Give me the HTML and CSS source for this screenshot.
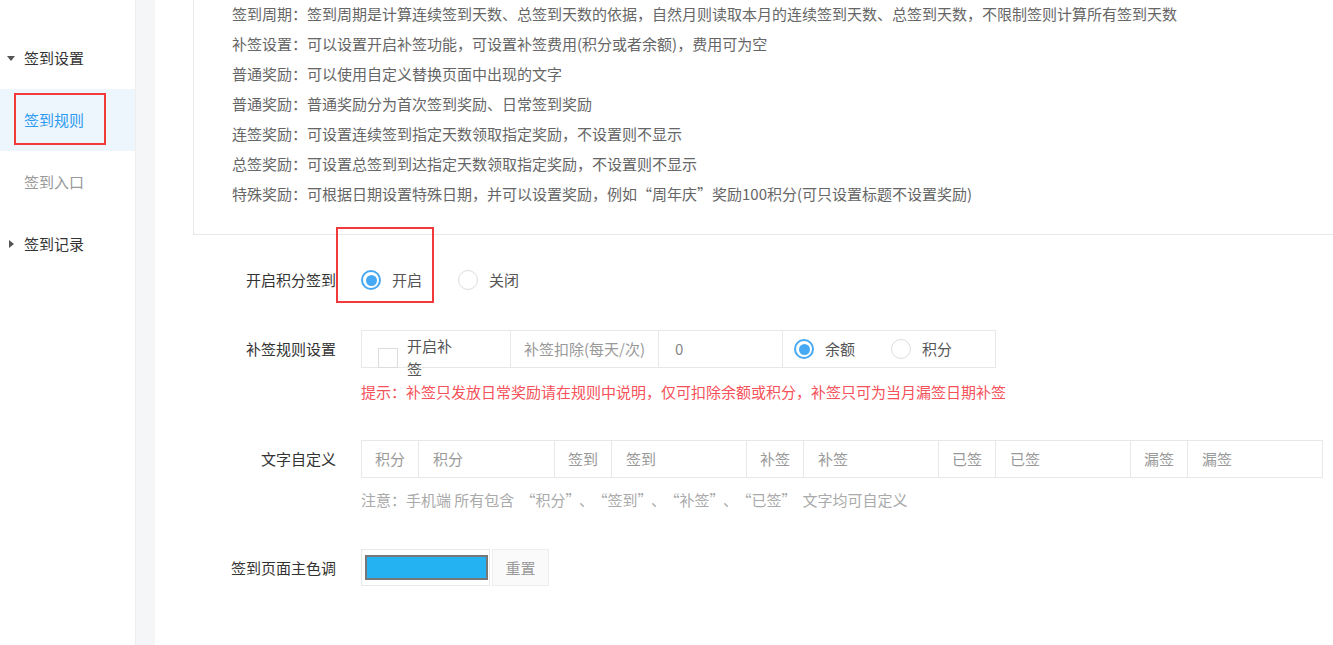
FILE: index.html
```html
<!DOCTYPE html>
<html lang="zh-CN">
<head>
    <meta charset="UTF-8">
    <meta name="viewport" content="width=device-width, initial-scale=1.0">
    <title>签到规则</title>
    <link rel="stylesheet" href="styles.css">
</head>
<body>
    <div class="layout">
        <!-- 左侧菜单 -->
        <aside class="sidebar">
            <div class="menu-title"><span class="caret caret-down"></span>签到设置</div>
            <div class="menu-item active">
                签到规则
                <span class="mark mark-menu"></span>
            </div>
            <div class="menu-item">签到入口</div>
            <div class="menu-title"><span class="caret caret-right"></span>签到记录</div>
        </aside>
        <div class="gutter"></div>

        <main class="content">
            <!-- 规则说明 -->
            <div class="rule-box">
                <div class="rule-line">签到周期：签到周期是计算连续签到天数、总签到天数的依据，自然月则读取本月的连续签到天数、总签到天数，不限制签则计算所有签到天数</div>
                <div class="rule-line">补签设置：可以设置开启补签功能，可设置补签费用(积分或者余额)，费用可为空</div>
                <div class="rule-line">普通奖励：可以使用自定义替换页面中出现的文字</div>
                <div class="rule-line">普通奖励：普通奖励分为首次签到奖励、日常签到奖励</div>
                <div class="rule-line">连签奖励：可设置连续签到指定天数领取指定奖励，不设置则不显示</div>
                <div class="rule-line">总签奖励：可设置总签到到达指定天数领取指定奖励，不设置则不显示</div>
                <div class="rule-line">特殊奖励：可根据日期设置特殊日期，并可以设置奖励，例如“周年庆”奖励100积分(可只设置标题不设置奖励)</div>
            </div>

            <!-- 表单 -->
            <form class="rule-form">
                <div class="form-item item-open">
                    <label class="form-label">开启积分签到</label>
                    <div class="form-control">
                        <label class="radio"><span class="radio-dot checked"></span><span class="radio-text">开启</span></label>
                        <label class="radio"><span class="radio-dot"></span><span class="radio-text">关闭</span></label>
                    </div>
                    <span class="mark mark-form"></span>
                </div>

                <div class="form-item item-repair">
                    <label class="form-label">补签规则设置</label>
                    <div class="form-control">
                        <div class="input-group">
                            <div class="cell cell-check">
                                <span class="checkbox"></span>
                                <span class="check-text">开启补签</span>
                            </div>
                            <div class="cell addon addon-wide">补签扣除(每天/次)</div>
                            <div class="cell cell-input cell-zero">0</div>
                            <div class="cell cell-radio">
                                <label class="radio"><span class="radio-dot checked"></span><span class="radio-text">余额</span></label>
                                <label class="radio"><span class="radio-dot"></span><span class="radio-text">积分</span></label>
                            </div>
                        </div>
                        <p class="tip tip-red">提示：补签只发放日常奖励请在规则中说明，仅可扣除余额或积分，补签只可为当月漏签日期补签</p>
                    </div>
                </div>

                <div class="form-item item-words">
                    <label class="form-label">文字自定义</label>
                    <div class="form-control">
                        <div class="input-group group-words">
                            <div class="cell addon">积分</div>
                            <div class="cell cell-input">积分</div>
                            <div class="cell addon">签到</div>
                            <div class="cell cell-input">签到</div>
                            <div class="cell addon">补签</div>
                            <div class="cell cell-input">补签</div>
                            <div class="cell addon">已签</div>
                            <div class="cell cell-input">已签</div>
                            <div class="cell addon">漏签</div>
                            <div class="cell cell-input">漏签</div>
                        </div>
                        <p class="tip tip-gray">注意：手机端 所有包含<span class="q-l">“</span>积分<span class="q-r">”</span>、<span class="q-l">“</span>签到<span class="q-r">”</span>、<span class="q-l">“</span>补签<span class="q-r">”</span>、<span class="q-l">“</span>已签<span class="q-r">”</span>文字均可自定义</p>
                    </div>
                </div>

                <div class="form-item item-color">
                    <label class="form-label">签到页面主色调</label>
                    <div class="form-control color-row">
                        <div class="color-picker"><span class="swatch"></span></div>
                        <button type="button" class="reset-btn">重置</button>
                    </div>
                </div>
            </form>
        </main>
    </div>
</body>
</html>
```

FILE: styles.css
```css
* {
    box-sizing: border-box;
}
body {
    margin: 0;
    padding: 0;
    font-family: "Noto Sans CJK SC", "Microsoft YaHei", sans-serif;
    font-size: 15px;
    color: #333;
    background: #fff;
    overflow: hidden;
}
.layout {
    display: flex;
    min-height: 645px;
}

/* 左侧菜单 */
.sidebar {
    width: 136px;
    flex-shrink: 0;
    padding-top: 27px;
    border-right: 1px solid #eee;
    background: #fff;
}
.menu-title,
.menu-item {
    position: relative;
    height: 62px;
    line-height: 62px;
    padding-left: 24px;
}
.menu-title {
    color: #333;
}
.menu-item {
    color: #999;
}
.menu-item.active {
    background: #edf5fd;
    color: #2d9bf0;
}
.caret {
    position: absolute;
    width: 0;
    height: 0;
}
.caret-down {
    left: 7px;
    top: 29px;
    border-left: 4.5px solid transparent;
    border-right: 4.5px solid transparent;
    border-top: 5px solid #555;
}
.caret-right {
    left: 9px;
    top: 27px;
    border-top: 4.5px solid transparent;
    border-bottom: 4.5px solid transparent;
    border-left: 5px solid #555;
}
.gutter {
    width: 19px;
    flex-shrink: 0;
    background: #f5f6f8;
}

/* 红色标注框 */
.mark {
    position: absolute;
    border: 2px solid #f33a3a;
    pointer-events: none;
}
.mark-menu {
    left: 14px;
    top: 4px;
    width: 92px;
    height: 52px;
}
.mark-form {
    left: 181px;
    top: -34px;
    width: 98px;
    height: 76px;
}

/* 内容 */
.content {
    flex: 1;
    min-width: 0;
}
.rule-box {
    margin: -32px 0 0 38px;
    padding: 30px 0 25px 38px;
    border: 1px solid #e8e8e8;
    border-right: none;
    color: #666;
}
.rule-line {
    line-height: 30px;
    white-space: nowrap;
}

.form-item {
    position: relative;
    display: flex;
    align-items: flex-start;
}
.form-label {
    width: 181px;
    flex-shrink: 0;
    text-align: right;
    line-height: 38px;
    color: #333;
    margin-right: 25px;
}
.form-control {
    display: flex;
    flex-direction: column;
    align-items: flex-start;
}
.item-open {
    margin-top: 26px;
}
.item-open .form-control {
    flex-direction: row;
    height: 38px;
    align-items: center;
}
.item-repair {
    margin-top: 31px;
}
.item-words {
    margin-top: 37px;
}
.item-color {
    margin-top: 38px;
}

/* 单选 */
.radio {
    display: inline-flex;
    align-items: center;
    margin-right: 36px;
    color: #555;
}
.radio-dot {
    position: relative;
    width: 20px;
    height: 20px;
    border-radius: 50%;
    border: 1px solid #ddd;
    background: #fff;
    margin-right: 11px;
}
.radio-dot.checked {
    border: 2px solid #47a9f3;
}
.radio-dot.checked::after {
    content: "";
    position: absolute;
    left: 2.5px;
    top: 2.5px;
    width: 11px;
    height: 11px;
    border-radius: 50%;
    background: #47a9f3;
}
.radio-text {
    line-height: 20px;
}

/* 输入组 */
.input-group {
    display: flex;
    height: 38px;
    border: 1px solid #e8e8e8;
}
.cell {
    height: 36px;
    line-height: 36px;
    border-left: 1px solid #e8e8e8;
    color: #999;
    white-space: nowrap;
    flex-shrink: 0;
}
.cell:first-child {
    border-left: none;
}
.cell-check {
    width: 148px;
    display: flex;
    align-items: flex-start;
    padding-left: 16px;
}
.checkbox {
    width: 20px;
    height: 20px;
    margin-top: 17px;
    border: 1px solid #ddd;
    background: #fff;
    flex-shrink: 0;
}
.check-text {
    width: 48px;
    margin: 3px 0 0 9px;
    line-height: 23px;
    white-space: normal;
    color: #555;
}
.addon {
    width: 57px;
    text-align: center;
}
.addon:first-child {
    width: 56px;
}
.addon-wide {
    width: 148px;
    text-align: left;
    padding-left: 13px;
}
.cell-input {
    width: 135px;
    padding-left: 14px;
}
.group-words .cell-input:nth-child(2) {
    width: 136px;
}
.cell-zero {
    width: 124px;
    padding-left: 16px;
    color: #888;
}
.cell-radio {
    width: 213px;
    display: flex;
    align-items: center;
    padding-left: 11px;
}

.tip {
    margin: 0;
    line-height: 22px;
    white-space: nowrap;
}
.tip-red {
    margin-top: 13px;
    color: #f5515a;
}
.tip-gray {
    margin-top: 11px;
    color: #aaa;
}
/* 全角引号的留白 */
.q-l {
    margin-left: 6px;
}
.q-r {
    margin-right: 6px;
}

/* 主色调 */
.color-row {
    flex-direction: row;
}
.color-picker {
    width: 129px;
    height: 37px;
    border: 1px solid #e8e8e8;
    padding: 5px 1px 4px 3px;
}
.swatch {
    display: block;
    width: 123px;
    height: 25px;
    border: 2px solid #777;
    background: #24b2f3;
}
.reset-btn {
    width: 57px;
    height: 37px;
    margin-left: 2px;
    border: 1px solid #eee;
    background: #fafafa;
    color: #999;
    font-family: inherit;
    font-size: 15px;
    padding: 0;
}
```
